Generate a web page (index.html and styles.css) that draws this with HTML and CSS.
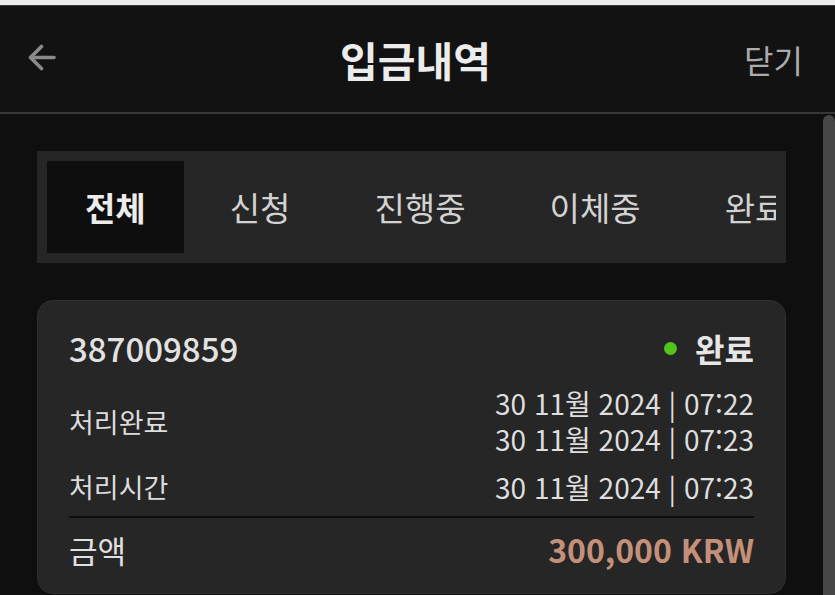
FILE: index.html
```html
<!DOCTYPE html>
<html lang="ko">
<head>
<meta charset="utf-8">
<title>입금내역</title>
<link rel="stylesheet" href="styles.css">
</head>
<body>
<div class="topstrip"></div>
<header class="header">
  <div class="back">
    <svg width="28" height="27" viewBox="0 0 28 27" fill="none" stroke="#8a8a8a" stroke-width="3.6" stroke-linecap="round" stroke-linejoin="round">
      <path d="M26 13.5H3"/>
      <path d="M13.5 2.5L2.5 13.5L13.5 24.5"/>
    </svg>
  </div>
  <h1 class="title">입금내역</h1>
  <div class="close">닫기</div>
</header>
<div class="body">
  <main class="content">
    <nav class="tabs">
      <div class="tabs-scroll">
        <div class="tab active">전체</div>
        <div class="tab">신청</div>
        <div class="tab">진행중</div>
        <div class="tab">이체중</div>
        <div class="tab">완료</div>
      </div>
    </nav>
    <section class="card">
      <div class="row row-head">
        <span class="txid">387009859</span>
        <span class="status"><i class="dot"></i>완료</span>
      </div>
      <div class="row row-done">
        <span class="label">처리완료</span>
        <span class="dates">
          <span class="date">30 11월 2024 | 07:22</span>
          <span class="date">30 11월 2024 | 07:23</span>
        </span>
      </div>
      <div class="row row-time">
        <span class="label">처리시간</span>
        <span class="date">30 11월 2024 | 07:23</span>
      </div>
      <div class="divider"></div>
      <div class="row row-amount">
        <span class="amount-label">금액</span>
        <span class="amount">300,000 KRW</span>
      </div>
    </section>
  </main>
  <div class="scrollbar"></div>
</div>
</body>
</html>
```
FILE: styles.css
```css
* { box-sizing: border-box; }
html, body {
  margin: 0;
  padding: 0;
}
body {
  width: 835px;
  height: 595px;
  overflow: hidden;
  background: #0f0f0f;
  font-family: "Noto Sans CJK KR", "Noto Sans", sans-serif;
  color: #e0e0e0;
  display: flex;
  flex-direction: column;
}
.topstrip {
  height: 5px;
  background: #ececec;
  flex: none;
}
.header {
  flex: none;
  height: 109px;
  background: #121212;
  border-top: 1px solid #3a3a3a;
  border-bottom: 2px solid #373737;
  display: grid;
  grid-template-columns: 1fr auto 1fr;
  align-items: center;
  padding: 0 32px 0 28px;
}
.back {
  display: flex;
  align-items: center;
  height: 27px;
  margin-top: -3px;
}
.back svg { display: block; }
.title {
  margin: 0;
  font-size: 41px;
  font-weight: 700;
  color: #ececec;
  line-height: 1;
  margin-top: 0;
}
.close {
  justify-self: end;
  font-size: 32px;
  font-weight: 400;
  color: #acacac;
  margin-top: 0;
}
.body {
  flex: 1;
  display: flex;
  min-height: 0;
}
.content {
  flex: 1;
  padding: 37px 37px 0 37px;
  min-width: 0;
}
.scrollbar {
  width: 12px;
  flex: none;
  background: #464646;
  border-radius: 6px 6px 0 0;
  margin-top: 1px;
}
.tabs {
  background: #262626;
  padding: 10px;
  height: 112px;
}
.tabs-scroll {
  display: flex;
  gap: 8px;
  overflow: hidden;
  height: 92px;
}
.tab {
  flex: none;
  height: 92px;
  padding: 0 38px;
  display: flex;
  align-items: center;
  font-size: 33px;
  color: #d2d2d2;
  white-space: nowrap;
}
.tab.active {
  background: #0e0e0e;
  font-weight: 700;
  color: #ececec;
}
.card {
  margin-top: 37px;
  background: #262626;
  border: 1px solid #2f2f2f;
  border-radius: 16px;
  padding: 25px 31px 22px;
}
.row {
  display: flex;
  justify-content: space-between;
  align-items: center;
}
.row-head { height: 44px; }
.txid {
  font-size: 33px;
  font-weight: 500;
  color: #e2e2e2;
}
.status {
  display: flex;
  align-items: center;
  font-size: 32px;
  font-weight: 700;
  color: #e6e6e6;
}
.dot {
  width: 13px;
  height: 13px;
  border-radius: 50%;
  background: #52c41a;
  margin-right: 18px;
}
.label {
  font-size: 27px;
  color: #dcdcdc;
}
.dates {
  display: flex;
  flex-direction: column;
  align-items: flex-end;
}
.date {
  font-size: 28px;
  line-height: 36px;
  color: #dedede;
  white-space: pre;
}
.row-done { margin-top: 15px; }
.row-time { margin-top: 10px; }
.divider {
  margin-top: 10px;
  height: 2px;
  background: #0e0e0e;
}
.row-amount {
  margin-top: 9px;
  height: 44px;
}
.amount-label {
  font-size: 31px;
  color: #e0e0e0;
}
.amount {
  font-size: 32px;
  font-weight: 700;
  color: #c4907a;
}
```
